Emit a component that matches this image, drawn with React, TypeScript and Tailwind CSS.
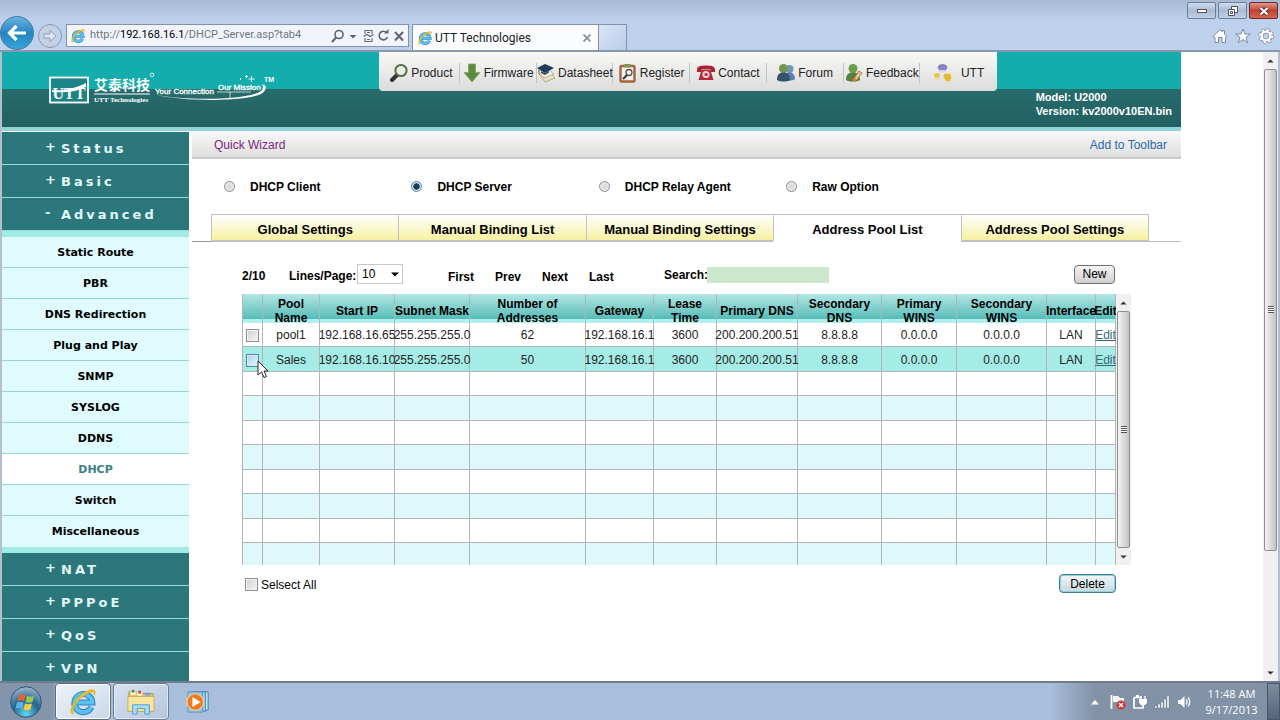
import { useState, ReactNode } from "react";

const topMenu = ["Product", "Firmware", "Datasheet", "Register", "Contact", "Forum", "Feedback", "UTT"];

const subItems = ["Static Route", "PBR", "DNS Redirection", "Plug and Play", "SNMP", "SYSLOG", "DDNS", "DHCP", "Switch", "Miscellaneous"];

const modes = ["DHCP Client", "DHCP Server", "DHCP Relay Agent", "Raw Option"];

const tabs = ["Global Settings", "Manual Binding List", "Manual Binding Settings", "Address Pool List", "Address Pool Settings"];

const columns = [
  { title: "", width: "w-[20px]" },
  { title: "Pool Name", width: "w-[57px]" },
  { title: "Start IP", width: "w-[75px]" },
  { title: "Subnet Mask", width: "w-[75px]" },
  { title: "Number of Addresses", width: "w-[116px]" },
  { title: "Gateway", width: "w-[68px]" },
  { title: "Lease Time", width: "w-[63px]" },
  { title: "Primary DNS", width: "w-[81px]" },
  { title: "Secondary DNS", width: "w-[84px]" },
  { title: "Primary WINS", width: "w-[75px]" },
  { title: "Secondary WINS", width: "w-[90px]" },
  { title: "Interface", width: "w-[49px]" },
  { title: "Edit", width: "w-[20px]" },
];

const pools = [
  ["pool1", "192.168.16.65", "255.255.255.0", "62", "192.168.16.1", "3600", "200.200.200.51", "8.8.8.8", "0.0.0.0", "0.0.0.0", "LAN"],
  ["Sales", "192.168.16.10", "255.255.255.0", "50", "192.168.16.1", "3600", "200.200.200.51", "8.8.8.8", "0.0.0.0", "0.0.0.0", "LAN"],
];

const IeLogo = ({ className }: { className: string }) => (
  <svg viewBox="0 0 32 32" className={className} aria-hidden="true">
    <path d="M25 21.5A9.6 9.6 0 1 1 26 16.5H9" fill="none" stroke="#2b7fc0" strokeWidth="6.4" />
    <path d="M25 21.5A9.6 9.6 0 1 1 26 16.5H9" fill="none" stroke="#5cc0ee" strokeWidth="4.4" />
    <path d="M5 29C-1 26 8 11 19 5C27 1 31 3 28 9C29 5 25 4 19 8C9 14 3 24 6 27Z" fill="#f2c21b" stroke="#d9a514" strokeWidth=".6" />
  </svg>
);

const MenuIcon = ({ name }: { name: string }) => {
  const art: Record<string, ReactNode> = {
    Product: (
      <>
        <path d="M8 12L3 17" stroke="#333" strokeWidth="4" strokeLinecap="round" />
        <circle cx="12" cy="7.5" r="5.6" fill="#e9eee6" stroke="#596b4c" strokeWidth="2" />
      </>
    ),
    Firmware: <path d="M6.500 1H13.500V9.500H18L10 19L2 9.500H6.500Z" fill="#5c8a3c" stroke="#7fa864" strokeWidth=".8" />,
    Datasheet: (
      <>
        <path d="M3 11L13 8L19 15L9 19Z" fill="#e9e3c4" stroke="#a59b6c" strokeWidth=".8" />
        <path d="M2 8L12 6L18 11L8 15Z" fill="#f6f4ea" stroke="#aaa487" strokeWidth=".8" />
        <path d="M1 5L9 1L18 5L9 10Z" fill="#1e3a5c" />
        <path d="M5 8V10L9 12L13 9.500V8L9 10Z" fill="#2c4a68" />
        <path d="M3 6V11" stroke="#9a7a2c" />
      </>
    ),
    Register: (
      <>
        <rect x="2.500" y="3" width="14" height="15.500" rx="1" fill="#f5f3ef" stroke="#a4633c" strokeWidth="2.400" />
        <rect x="6" y="1" width="7" height="3.500" rx="1" fill="#7d9a55" />
        <circle cx="11" cy="9.500" r="3" fill="none" stroke="#555" strokeWidth="1.300" />
        <path d="M9 12L5 16" stroke="#333" strokeWidth="2" />
      </>
    ),
    Contact: (
      <>
        <path d="M1 7C1 3 5 2.500 10 2.500S19 3 19 7V9H14.500V6.500H5.500V9H1Z" fill="#a82434" />
        <path d="M5.500 7H14.500L17.500 17H2.500Z" fill="#b52a3c" />
        <circle cx="10" cy="11.500" r="3.600" fill="#f0cfd2" />
        <circle cx="10" cy="11.500" r="1.600" fill="#b52a3c" />
      </>
    ),
    Forum: (
      <>
        <circle cx="13.500" cy="6" r="4" fill="#7294bd" />
        <path d="M8 17C8 11 11 9.500 14 9.500S19 12 19 16C17 18 12 18 8 17Z" fill="#5c80b0" />
        <circle cx="7.500" cy="5.500" r="4.500" fill="#72974f" />
        <path d="M1 17C1 11 4 9.500 7.500 9.500S14 11 14 17C11 19 4 19 1 17Z" fill="#35536b" />
      </>
    ),
    Feedback: (
      <>
        <circle cx="9" cy="5.500" r="4.500" fill="#6f9a4a" />
        <path d="M2 17C2 11 5 9.500 9 9.500S16 11 16 17C13 19 5 19 2 17Z" fill="#587f40" />
        <path d="M9 17L15 8L18 10L12 18Z" fill="#e3c98f" stroke="#9b6932" strokeWidth=".8" />
        <circle cx="10.500" cy="16.500" r="1.700" fill="#d7852b" />
      </>
    ),
    UTT: (
      <>
        <ellipse cx="9.500" cy="4.500" rx="4.800" ry="3.500" fill="#8d82bb" />
        <path d="M5 8C7 6.500 12 6.500 14 8L12 9.500H7Z" fill="#d9d6e6" />
        <ellipse cx="4" cy="12.500" rx="3" ry="2.500" fill="#e6c34b" />
        <path d="M1 16C3 14 5 14 7 16L5 17H3Z" fill="#efdc9a" />
        <path d="M11 11L17 10.500L18.500 14L17 18.500L13 18L10.500 14Z" fill="#e8b92e" />
      </>
    ),
  };
  return (
    <svg viewBox="0 0 20 20" className="size-5 shrink-0" aria-hidden="true">
      {art[name]}
    </svg>
  );
};

const ScrollArrow = ({ up }: { up?: boolean }) => (
  <svg viewBox="0 0 8 5" className="h-1 w-[7px]" aria-hidden="true">
    <path d={up ? "M0 4.500L4 .5L8 4.500Z" : "M0 .5L4 4.500L8 .5Z"} fill="#333" />
  </svg>
);

const ScrollBar = ({ thumb }: { thumb: string }) => (
  <div className="flex w-[15px] shrink-0 flex-col items-center bg-[#f0f0f0]">
    <span className="flex h-[17px] items-center"><ScrollArrow up /></span>
    <div className="flex w-full flex-1 flex-col">
      <div className={`flex w-[13px] flex-col items-center justify-center self-center rounded-xs border border-[#8f8f8f] bg-linear-to-r from-[#f4f4f4] to-[#c3c3c3] ${thumb}`}>
        <span className="h-px w-1.5 bg-[#555]" />
        <span className="h-px w-1.5 bg-white" />
        <span className="h-px w-1.5 bg-[#555]" />
        <span className="h-px w-1.5 bg-white" />
        <span className="h-px w-1.5 bg-[#555]" />
        <span className="h-px w-1.5 bg-white" />
        <span className="h-px w-1.5 bg-[#555]" />
      </div>
    </div>
    <span className="flex h-[17px] items-center"><ScrollArrow /></span>
  </div>
);

const BrowserChrome = () => (
  <header className="flex h-[52px] shrink-0 border-b-2 border-[#8b98ab] bg-linear-to-b from-[#a7bad4] to-[#bed1ec] to-40% font-[Roboto,'Open_Sans',sans-serif]">
    <div className="flex items-end">
      <button aria-label="Back" className="flex size-[34px] items-center justify-center rounded-full border border-[#47799f] bg-linear-to-b from-[#67b4df] via-[#2484c0] to-[#36a5da]">
        <svg viewBox="0 0 20 20" className="size-5" fill="none" stroke="#fff" strokeWidth="3.200" aria-hidden="true">
          <path d="M19 10H3M9.500 3L2.500 10L9.500 17" />
        </svg>
      </button>
      <button aria-label="Forward" className="mx-1 mb-0.5 flex size-6 items-center justify-center rounded-full border border-[#8798b0] bg-[#c3d1e4]">
        <svg viewBox="0 0 16 16" className="size-4" fill="#dce5f1" stroke="#8fa0b8" aria-hidden="true">
          <path d="M2 6H8V2.500L14 8L8 13.500V10H2Z" />
        </svg>
      </button>
      <div className="mb-[3px] flex h-[23px] w-[343px] items-center border border-[#8592a5] bg-[#f1f5fb] px-[3px] text-[#555c68]">
        <IeLogo className="size-4" />
        <span className="ml-1 flex-1 text-[11px] text-[#70757d]">
          http://<span className="text-black">192.168.16.1</span>/DHCP_Server.asp?tab4
        </span>
        <svg viewBox="0 0 74 16" className="h-4 w-[74px]" fill="none" stroke="#5e6570" strokeWidth="1.600" aria-hidden="true">
          <circle cx="8" cy="6.500" r="4" />
          <path d="M5 9.500L1 14" strokeWidth="2" />
          <path d="M18.500 7H25.500L22 10.500Z" fill="#5e6570" stroke="none" />
          <path d="M34 6V2.500H41V6M34 10V13.500H41V10M32.500 8.500L36 6.500L39 8.500L42.500 6.500M36 4.500H39M36 11.500H39" strokeWidth="1.100" />
          <path d="M55.500 4.500A4.300 4.300 0 1 0 56.500 9" />
          <path d="M53 5.500H57.500V1Z" fill="#5e6570" stroke="none" />
          <path d="M64 4L72 12.500M72 4L64 12.500" strokeWidth="2" />
        </svg>
      </div>
      <div className="ml-[3px] flex h-[26px] w-[187px] items-center border border-b-0 border-[#8592a5] bg-[#fafcfe] pr-[3px] pl-1 text-xs text-[#222]">
        <IeLogo className="size-4" />
        <span className="ml-0.5 flex-1">UTT Technologies</span>
        <button aria-label="Close tab" className="p-1">
          <svg viewBox="0 0 8 8" className="size-2" stroke="#8e9299" strokeWidth="1.800" aria-hidden="true"><path d="M.5 .5L7.500 7.500M7.500 .5L.5 7.500" /></svg>
        </button>
      </div>
      <button aria-label="New tab" className="h-[26px] w-[28px] border border-b-0 border-l-0 border-[#8592a5] bg-linear-to-br from-[#d9e6f7] to-[#b9cde9]" />
    </div>
    <div className="ml-auto flex flex-col items-end justify-between pt-0.5 pr-0.5 pb-1.5">
      <div className="flex gap-0.5">
        <button aria-label="Minimize" className="flex h-[17px] w-[29px] items-center justify-center rounded-xs border border-[#6d7e97] bg-linear-to-b from-[#cfdcee] via-[#a9bbd3] to-[#c0d0e6]">
          <span className="h-1 w-2.5 border border-[#555] bg-white" />
        </button>
        <button aria-label="Restore" className="flex h-[17px] w-[29px] items-center justify-center rounded-xs border border-[#6d7e97] bg-linear-to-b from-[#cfdcee] via-[#a9bbd3] to-[#c0d0e6]">
          <svg viewBox="0 0 12 12" className="size-3" fill="#fff" stroke="#4b5361" aria-hidden="true">
            <path d="M4.500 1.500H10.500V7.500H4.500Z" /><path d="M1.500 4.500H7.500V10.500H1.500Z" /><path d="M3.500 6.500H5.500V8.500H3.500Z" />
          </svg>
        </button>
        <button aria-label="Close" className="flex h-[17px] w-[29px] items-center justify-center rounded-xs border border-[#6b2b2b] bg-linear-to-b from-[#e0988c] via-[#bd4032] to-[#d2694f]">
          <svg viewBox="0 0 12 12" className="size-3" aria-hidden="true">
            <path d="M2.500 3L9.500 9.500M9.500 3L2.500 9.500" stroke="#5c2a2a" strokeWidth="3.800" />
            <path d="M2.500 3L9.500 9.500M9.500 3L2.500 9.500" stroke="#fff" strokeWidth="2.200" />
          </svg>
        </button>
      </div>
      <div className="flex gap-[7px] pr-1">
        <button aria-label="Home">
          <svg viewBox="0 0 16 16" className="size-4" fill="#fff" stroke="#7c8898" aria-hidden="true"><path d="M1 8.500L8 1.500L10.500 4V2.500H12.500V6L15 8.500L13.500 9.500V14.500H10V9.500H6.500V14.500H3V9.500Z" /></svg>
        </button>
        <button aria-label="Favorites">
          <svg viewBox="0 0 16 16" className="size-4" fill="#fff" stroke="#7c8898" aria-hidden="true"><path d="M8 1L10 6H15.300L11 9.300L12.600 14.700L8 11.500L3.400 14.700L5 9.300L.7 6H6Z" /></svg>
        </button>
        <button aria-label="Tools">
          <svg viewBox="0 0 16 16" className="size-4" fill="none" aria-hidden="true">
            <circle cx="8" cy="8" r="6.300" stroke="#7c8898" strokeWidth="3" strokeDasharray="2.600 2.350" />
            <circle cx="8" cy="8" r="4.600" stroke="#7c8898" strokeWidth="4" />
            <circle cx="8" cy="8" r="6" stroke="#fff" strokeWidth="2.200" strokeDasharray="2.200 2.510" />
            <circle cx="8" cy="8" r="4.400" stroke="#fff" strokeWidth="2.400" />
          </svg>
        </button>
      </div>
    </div>
  </header>
);

const BrandLogo = () => (
  <svg viewBox="0 0 230 34" className="mt-5 ml-[46px] h-[34px] w-[230px]" fill="#fff" aria-label="UTT Technologies">
    <rect x="2" y="5.500" width="38" height="25" fill="#1c8486" stroke="#fff" strokeWidth="1.800" />
    <text x="21" y="27" textAnchor="middle" className="font-['Liberation_Serif',serif] text-[16px] font-bold">UTT</text>
    <path d="M4 18C14 19 26 17 38 11V15C28 20 14 21 4 20Z" />
    <text x="46" y="18" className="font-['Noto_Sans_CJK_SC',sans-serif] text-[14px] font-bold">艾泰科技</text>
    <circle cx="104" cy="2.800" r="1.800" fill="none" stroke="#fff" strokeWidth=".8" />
    <path d="M46 21.500H102V22.500H46Z" />
    <text x="46" y="30" className="font-['Liberation_Serif',serif] text-[7px] font-bold">UTT Technologies</text>
    <text x="107" y="22" className="font-['Liberation_Sans',sans-serif] text-[8px]" stroke="#fff" strokeWidth=".3">Your Connection</text>
    <text x="170" y="18" className="font-['Liberation_Sans',sans-serif] text-[8px]" stroke="#fff" strokeWidth=".3">Our Mission</text>
    <path d="M108 23C135 28.500 205 29 214 18C216 15 215 13 213 12.500C219 12 219 17 215 20.500C203 31 133 29 108 23Z" />
    <path d="M169 20H203M182 20V26" stroke="#fff" strokeWidth=".7" />
    <path d="M203.500 4V10M200.500 7H206.500M198.500 3V6M197 4.500H200M192.500 6V8" stroke="#fff" strokeWidth=".9" />
    <text x="216" y="10" className="font-['Liberation_Sans',sans-serif] text-[7px] font-bold">TM</text>
  </svg>
);

const SiteHeader = () => (
  <div className="flex h-[75px] items-start bg-linear-to-b from-[#14acac] from-50% via-[#276c6d] via-50% to-[#235f62] shadow-[0_4px_0_#8ed3d6]">
    <BrandLogo />
    <nav className="ml-[101px] grid h-[39px] w-[618px] grid-cols-8 items-center rounded-b-sm bg-linear-to-b from-[#f8f8f6] to-[#dcdcdc] pt-0.5 pl-1">
      {topMenu.map((item) => (
        <a key={item} href="#" className={`flex items-center justify-center border-r border-[#c4c4c4] text-xs leading-3 text-[#222] last:border-0 ${item === "UTT" ? "gap-2" : "gap-0.5"}`}>
          <MenuIcon name={item} />
          {item}
        </a>
      ))}
    </nav>
    <p className="mt-[38px] mr-[9px] ml-auto text-[11px] leading-[14px] font-bold text-white">
      Model: U2000
      <br />
      Version: kv2000v10EN.bin
    </p>
  </div>
);

const SideSection = ({ sign, name }: { sign: string; name: string }) => (
  <button className="flex h-[33px] shrink-0 items-center border-b border-[#9fd6d6] bg-[#2b777b] pt-0.5 pl-[43px] text-left text-[13px] font-bold text-[#e2f8f8]">
    <span className="w-4 pb-1">{sign}</span>
    <span className="tracking-[3px]">{name}</span>
  </button>
);

const Sidebar = () => {
  const [active, setActive] = useState("DHCP");
  return (
    <aside className="flex w-[187px] shrink-0 flex-col overflow-hidden pt-[5px] font-['DejaVu_Sans',sans-serif]">
      <SideSection sign="+" name="Status" />
      <SideSection sign="+" name="Basic" />
      <SideSection sign="-" name="Advanced" />
      <div className="shrink-0 border-y-[6px] border-[#a0ebe4]">
        {subItems.map((item) => (
          <button
            key={item}
            onClick={() => setActive(item)}
            className={`block h-[31px] w-full border-b border-[#9ad4d4] pt-0.5 text-[11px] font-bold last:border-0 ${item === active ? "bg-white text-[#3c7f84]" : "bg-[#dffbfd] text-black"}`}
          >
            {item}
          </button>
        ))}
      </div>
      <SideSection sign="+" name="NAT" />
      <SideSection sign="+" name="PPPoE" />
      <SideSection sign="+" name="QoS" />
      <SideSection sign="+" name="VPN" />
    </aside>
  );
};

const checkbox = "block size-[13px] appearance-none border border-[#8e8f8f] bg-linear-to-br from-[#cfcfcf] to-[#f7f7f7] shadow-[inset_0_0_0_1px_#f4f4f4] checked:bg-[#2b777b]";
const hotCheckbox = "block size-[13px] appearance-none border border-[#5586a3] bg-linear-to-br from-[#a9d3ea] to-[#e6f5fc] shadow-[inset_0_0_0_1px_#d5edf8] checked:bg-[#2b777b]";

const PoolTable = () => (
  <div className="mr-[50px] ml-[50px] flex h-[271px]">
    <div className="flex-1 overflow-hidden">
      <table className="w-full table-fixed border-separate border-spacing-0 border-l border-[#adb9b9] text-center text-xs">
        <thead>
          <tr>
            {columns.map((col) => (
              <th key={col.title} className={`${col.width} border-r border-[#9dbfbf] bg-linear-to-b from-[#b2e6e5] via-[#55bdb9] via-85% to-[#b0f0ec] to-85% p-0 leading-[14px]`}>
                <div className="flex h-[29px] items-center justify-center pt-1">
                  <span>{col.title}</span>
                </div>
              </th>
            ))}
          </tr>
        </thead>
        <tbody>
          {Array.from({ length: 10 }, (_, i) => (
            <tr key={i} className={`h-6 even:h-[25px] ${i === 1 ? "bg-[#a5ece6]" : "even:bg-[#dff8fc]"}`}>
              <td className="border-r border-b border-[#b4b4b4] p-0 pt-0.5 pl-[3px]">
                {pools[i] && <input type="checkbox" aria-label={`Select ${pools[i][0]}`} className={i === 1 ? hotCheckbox : checkbox} />}
              </td>
              {columns.slice(1, 12).map((col, c) => (
                <td key={col.title} className="border-r border-b border-[#b4b4b4] p-0 pt-px leading-4 whitespace-nowrap text-[#222]">
                  <div className="flex justify-center">{pools[i]?.[c]}</div>
                </td>
              ))}
              <td className="border-r border-b border-[#b4b4b4] p-0 pt-px leading-4">
                {pools[i] && <a href="#" className="flex justify-center text-[#356a75] underline">Edit</a>}
              </td>
            </tr>
          ))}
        </tbody>
      </table>
    </div>
    <ScrollBar thumb="flex-1" />
  </div>
);

const DhcpPage = () => {
  const [mode, setMode] = useState("DHCP Server");
  const [tab, setTab] = useState("Address Pool List");
  return (
    <main className="ml-[3px] min-w-0 flex-1 pt-1">
      <div className="flex h-7 items-center justify-between border-b-2 border-[#c9c9c9] bg-linear-to-b from-[#f8f8f8] to-[#dfdfdd] pt-0.5 pr-[14px] pl-[22px] text-xs">
        <a href="#" className="text-[#7d2483]">Quick Wizard</a>
        <a href="#" className="text-[#2a69ab]">Add to Toolbar</a>
      </div>

      <div className="mr-5 ml-8 grid h-[55px] grid-cols-5 items-center text-xs font-bold">
        {modes.map((name) => (
          <label key={name} className="flex items-center gap-[15px]">
            <input
              type="radio"
              name="mode"
              checked={mode === name}
              onChange={() => setMode(name)}
              className="size-[11px] appearance-none rounded-full border border-[#8c8c8c] bg-radial from-[#d4d4d4] to-[#f3f3f3] checked:border-[#5b86a6] checked:from-[#183f5c] checked:from-45% checked:to-[#cfe3f0] checked:to-55%"
            />
            {name}
          </label>
        ))}
      </div>

      <div className="flex h-7 text-[13px] font-bold">
        <span className="w-[19px] border-b border-[#9a9a9a]" />
        {tabs.map((name) => (
          <button
            key={name}
            onClick={() => setTab(name)}
            className={`flex-1 border-t border-l border-[#c2c2c2] pt-1 last-of-type:border-r ${name === tab ? "border-b-2 border-b-white bg-white" : "border-b-2 bg-linear-to-b from-white to-[#f6f0a0]"}`}
          >
            {name}
          </button>
        ))}
        <span className="w-8 border-b border-[#bdbdbd]" />
      </div>

      <div className="mr-[66px] ml-[50px] flex h-[52px] items-center pt-3 text-xs font-bold">
        <span className="w-[47px] pt-1">2/10</span>
        <label htmlFor="lines" className="w-[68px] pt-1">Lines/Page:</label>
        <div className="relative mr-[45px]">
          <select id="lines" className="h-5 w-[46px] appearance-none border border-[#c6c6cc] bg-white pl-1 text-xs font-normal">
            <option>10</option>
            <option>20</option>
            <option>50</option>
          </select>
          <svg viewBox="0 0 8 5" className="pointer-events-none absolute top-2 right-1 h-[5px] w-2" aria-hidden="true"><path d="M0 .5H8L4 4.500Z" /></svg>
        </div>
        {["First", "Prev", "Next", "Last"].map((name) => (
          <button key={name} className="w-[47px] pt-1.5 text-left">{name}</button>
        ))}
        <label htmlFor="search" className="ml-7 w-[43px] pt-0.5 whitespace-nowrap">Search:</label>
        <input id="search" type="text" className="mt-0.5 h-4 w-[122px] bg-[#cbe8cd] px-1 font-normal" />
        <button className="ml-auto h-[19px] w-[41px] rounded-sm border border-[#707070] bg-linear-to-b from-[#f4f4f4] to-[#cfcfcf] leading-4 font-normal">New</button>
      </div>

      <PoolTable />

      <div className="mr-[65px] ml-[53px] flex items-center justify-between pt-[9px] text-xs">
        <label className="flex items-center gap-[3px] pt-0.5">
          <input type="checkbox" className={checkbox} />
          Selsect All
        </label>
        <button className="h-[19px] w-[57px] rounded-sm border border-[#3c7f93] bg-linear-to-b from-[#f0f7f9] to-[#c9d8dc] leading-3 shadow-[inset_0_0_0_1px_#8fd0e2]">Delete</button>
      </div>
    </main>
  );
};

const Taskbar = () => (
  <footer className="flex h-[39px] shrink-0 border-t-2 border-[#6f7c8d] bg-linear-to-r from-[#8395aa] from-4% via-[#a9bedb] via-5% to-[#a9bedb] font-['Open_Sans','Noto_Sans',sans-serif]">
    <button aria-label="Start" className="flex w-[55px] items-center justify-center pr-1">
      <svg viewBox="0 0 32 32" className="size-8" aria-hidden="true">
        <defs>
          <radialGradient id="orb" cx=".5" cy=".9" r=".9">
            <stop offset="0" stopColor="#65d7f2" />
            <stop offset=".5" stopColor="#246491" />
            <stop offset="1" stopColor="#9db9cf" />
          </radialGradient>
        </defs>
        <circle cx="16" cy="16" r="15.300" fill="url(#orb)" stroke="#35536f" />
        <path d="M9 9C11 8 13 8 15.500 9.500L14 15.500C12 14 10 14 7.500 15Z" fill="#e86130" />
        <path d="M17 10C19 11 21.500 11 24 10L22.500 16C20 17 18 17 15.500 16Z" fill="#9ac94a" />
        <path d="M7 16.500C9.500 15.500 11.500 15.500 13.500 17L12 23C10 21.500 8 21.500 5.500 22.500Z" fill="#5bb4e8" />
        <path d="M15 17.500C17.500 18.500 19.500 18.500 22 17.500L20.500 23.500C18 24.500 16 24.500 13.500 23.500Z" fill="#f9ce3f" />
      </svg>
    </button>
    <button aria-label="Internet Explorer" className="flex w-14 items-center justify-center rounded-sm border border-[#5e6c80] bg-linear-to-br from-[#eef3fa] to-[#c9d7ea] shadow-[inset_0_0_0_1px_#fff]">
      <IeLogo className="size-[30px]" />
    </button>
    <button aria-label="Windows Explorer" className="ml-0.5 flex w-14 items-center justify-center rounded-sm border border-[#6d7c92] bg-linear-to-br from-[#d9e3f1] to-[#b3c5de] shadow-[inset_0_0_0_1px_#dfe8f4]">
      <svg viewBox="0 0 32 30" className="h-7 w-8" aria-hidden="true">
        <path d="M3 4H11L13 6H29V25H3Z" fill="#e5cb73" stroke="#b4933c" />
        <path d="M5 3H10V7H5Z" fill="#fff" /><path d="M6 2H9V5H6Z" fill="#3f9a3f" />
        <path d="M12 4H17V8H12Z" fill="#fff" /><path d="M13 3H16V6H13Z" fill="#d33f2e" />
        <path d="M20 5H26V8H20Z" fill="#6fa4d9" />
        <path d="M2 9H30V25H2Z" fill="#f6e5a0" stroke="#c9ab55" />
        <path d="M7 28V18H25V28H20V22H12V28Z" fill="#a8dbf2" stroke="#4d9cc7" />
      </svg>
    </button>
    <button aria-label="Media Player" className="ml-4 flex items-center">
      <svg viewBox="0 0 28 26" className="h-6 w-[26px]" aria-hidden="true">
        <path d="M9 2H25V22H9Z" fill="#bfe1f4" stroke="#3c7fae" />
        <path d="M6 2H22V23H6Z" fill="#a5d3ee" stroke="#3c7fae" />
        <path d="M3 2H19V24H3Z" fill="#8fc6e8" stroke="#5b93b8" />
        <circle cx="11" cy="13" r="9" fill="#ee7a20" stroke="#f8d0a5" strokeWidth="1.200" />
        <path d="M8 7.500L17 13L8 18.500Z" fill="#fff" />
      </svg>
    </button>
    <div className="ml-auto flex items-center bg-linear-to-r from-[#a9bedb] to-[#8192a6] to-20% pl-10">
      <svg viewBox="0 0 102 16" className="h-4 w-[102px]" aria-hidden="true">
        <path d="M1 10.500L5 6L9 10.500Z" fill="#fff" />
        <path d="M21.500 1V15" stroke="#fff" strokeWidth="1.800" />
        <path d="M23 2H28L30 4H34V9H29L27 8H23Z" fill="#f4f4f4" />
        <circle cx="31" cy="11" r="4.500" fill="#d03531" />
        <path d="M29 9L33 13M33 9L29 13" stroke="#fff" strokeWidth="1.400" />
        <path d="M44 3.500H52M44 3.500V14H53V11" fill="none" stroke="#fff" strokeWidth="1.700" />
        <path d="M46 2H49" stroke="#fff" strokeWidth="2" />
        <path d="M49 5H57V9L55 11H51L49 9Z" fill="#fff" />
        <path d="M51 5V2M55 5V2M53 11V14" stroke="#fff" strokeWidth="1.400" />
        <path d="M65 14V12H67V14ZM68 14V10H70V14ZM71 14V8H73V14ZM74 14V5H76V14ZM77 14V2H79V14Z" fill="#fff" stroke="#5e6e80" strokeWidth=".4" />
        <path d="M88 6H90.500L94.500 2V14L90.500 10H88Z" fill="#fff" />
        <path d="M96 5.500Q98 8 96 10.500M98 3.500Q101.500 8 98 12.500" fill="none" stroke="#fff" strokeWidth="1.300" />
      </svg>
      <p className="w-[75px] pl-1 text-center text-[11px] leading-4 text-white">
        11:48 AM
        <br />
        9/17/2013
      </p>
      <button aria-label="Show desktop" className="h-full w-[13px] border border-[#485667] bg-linear-to-b from-[#7c8b9d] to-[#56657a]" />
    </div>
  </footer>
);

export default function App() {
  return (
    <div className="relative flex h-screen flex-col overflow-hidden bg-white font-['Liberation_Sans',Arial,sans-serif] text-black">
      <BrowserChrome />
      <div className="flex min-h-0 flex-1 border-x-2 border-[#b4bfcc]">
        <div className="mr-[82px] flex min-w-0 flex-1 flex-col">
          <SiteHeader />
          <div className="flex min-h-0 flex-1">
            <Sidebar />
            <DhcpPage />
          </div>
        </div>
        <ScrollBar thumb="h-[81%]" />
      </div>
      <Taskbar />
      <svg viewBox="0 0 12 19" className="pointer-events-none absolute top-[360px] left-[257px] h-[19px] w-3" aria-hidden="true">
        <path d="M1 1V15L4.500 12L7 17.500L9.500 16.500L7 11H11Z" fill="#fff" stroke="#222" />
      </svg>
    </div>
  );
}
